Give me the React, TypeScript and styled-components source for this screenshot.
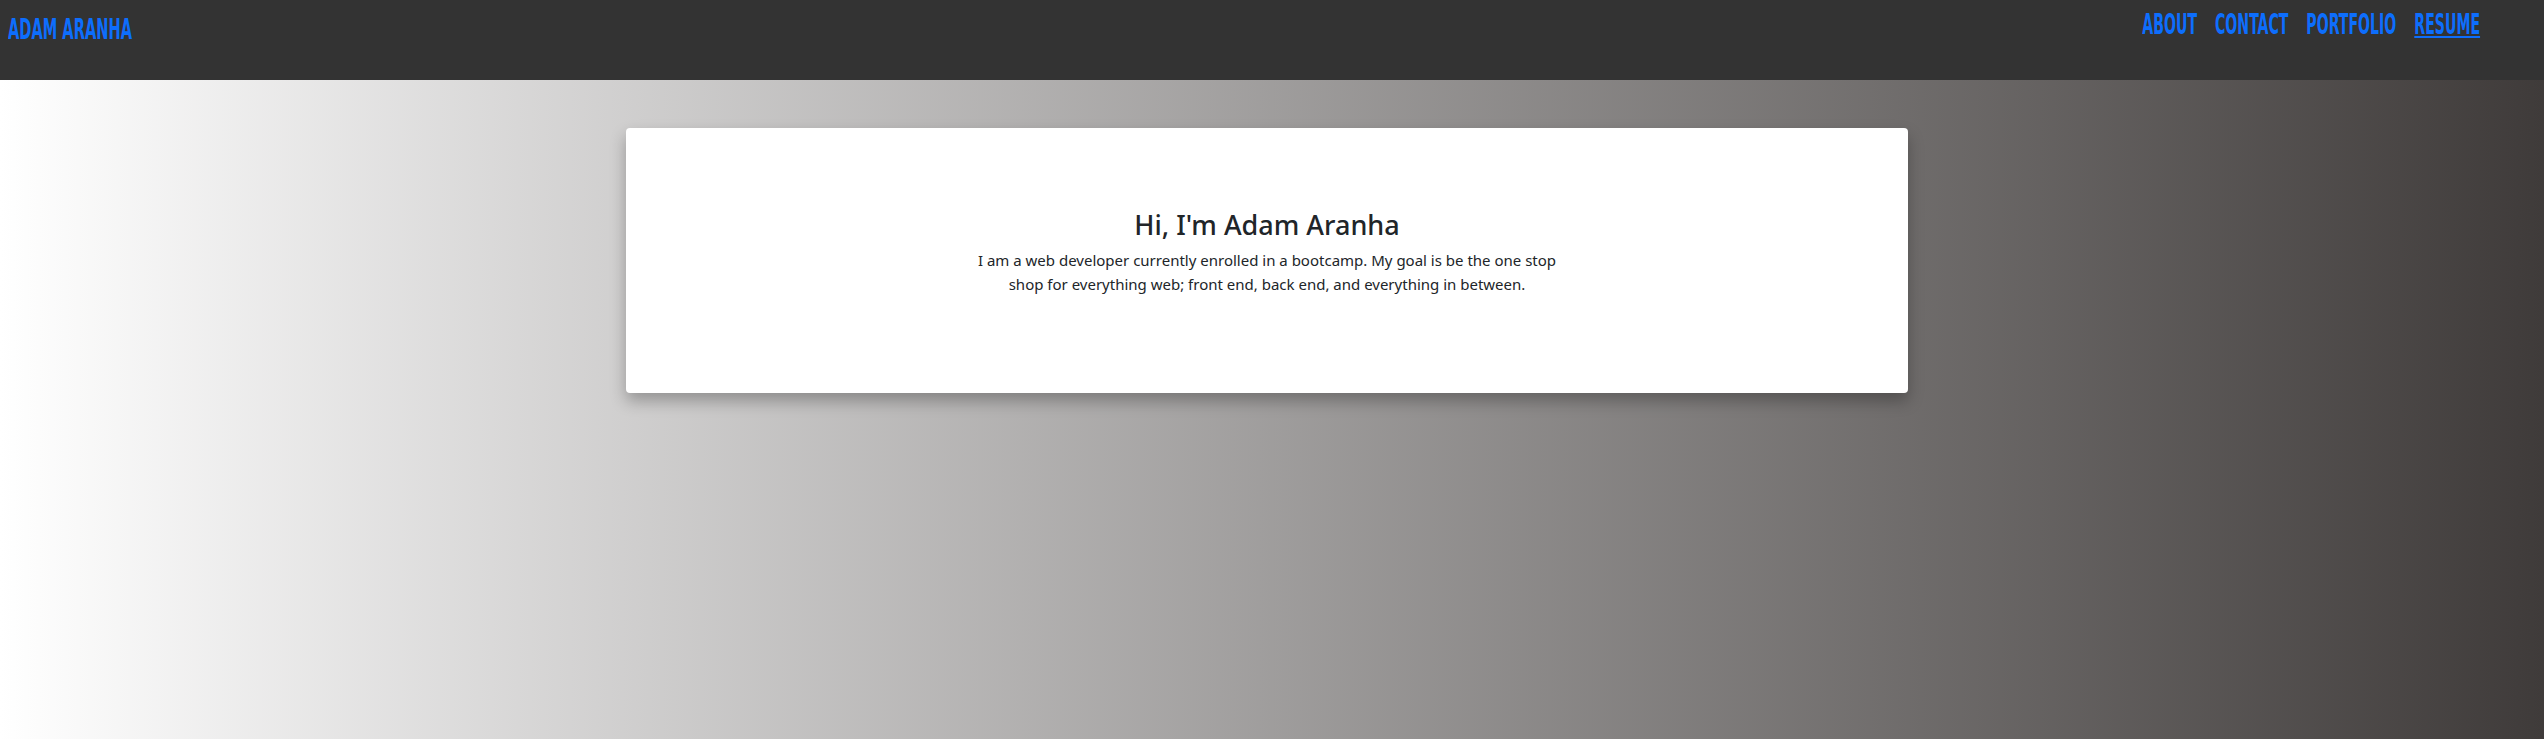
import React from "react";
import styled, { createGlobalStyle } from "styled-components";

const Global = createGlobalStyle`
  html, body { margin: 0; padding: 0; }
  body {
    min-height: 739px;
    background: linear-gradient(to right, #ffffff 0%, #3f3b3a 100%);
    font-family: "Noto Sans", "Open Sans", sans-serif;
    color: #212529;
  }
`;

const Page = styled.div`
  min-height: 739px;
  display: flex;
  flex-direction: column;
`;

const Header = styled.header`
  height: 80px;
  background: #333333;
  display: flex;
  justify-content: space-between;
  align-items: flex-start;
  padding: 0 64px 0 8px;
  box-sizing: border-box;
`;

const Brand = styled.a`
  display: inline-block;
  font-family: "DejaVu Sans Condensed", "Liberation Sans", sans-serif;
  font-weight: 700;
  font-stretch: condensed;
  font-size: 28px;
  line-height: 1;
  color: #0d6efd;
  text-decoration: none;
  text-transform: uppercase;
  margin-top: 16px;
  transform: scaleX(0.58);
  transform-origin: left top;
`;

const Nav = styled.nav`
  display: flex;
  gap: 32px;
  margin-top: 11px;
  transform: scaleX(0.56);
  transform-origin: right top;
`;

const NavLink = styled.a<{ $active?: boolean }>`
  font-family: "DejaVu Sans Condensed", "Liberation Sans", sans-serif;
  font-weight: 700;
  font-stretch: condensed;
  font-size: 28px;
  line-height: 1;
  color: #0d6efd;
  text-transform: uppercase;
  text-decoration: ${(p) => (p.$active ? "underline" : "none")};
  text-decoration-thickness: 2px;
  text-underline-offset: 2px;
`;

const Main = styled.main`
  display: flex;
  justify-content: center;
  padding: 48px 10px 0 0;
`;

const Card = styled.section`
  width: 1282px;
  height: 265px;
  box-sizing: border-box;
  background: #ffffff;
  border-radius: 4px;
  box-shadow: 0 8px 16px rgba(0, 0, 0, 0.28);
  display: flex;
  flex-direction: column;
  align-items: center;
  padding-top: 81px;
  text-align: center;
`;

const Title = styled.h3`
  margin: 0 0 7px;
  font-size: 27px;
  font-weight: 500;
  line-height: 1.2;
  color: #212529;
`;

const Intro = styled.p`
  margin: 0;
  font-size: 15px;
  line-height: 24px;
  color: #212529;
`;

export default function App() {
  return (
    <>
      <Global />
      <Page>
        <Header>
          <Brand href="#">Adam Aranha</Brand>
          <Nav>
            <NavLink href="#">About</NavLink>
            <NavLink href="#">Contact</NavLink>
            <NavLink href="#">Portfolio</NavLink>
            <NavLink href="#" $active>
              Resume
            </NavLink>
          </Nav>
        </Header>
        <Main>
          <Card>
            <Title>Hi, I'm Adam Aranha</Title>
            <Intro>
              I am a web developer currently enrolled in a bootcamp. My goal is be the one stop
              <br />
              shop for everything web; front end, back end, and everything in between.
            </Intro>
          </Card>
        </Main>
      </Page>
    </>
  );
}
